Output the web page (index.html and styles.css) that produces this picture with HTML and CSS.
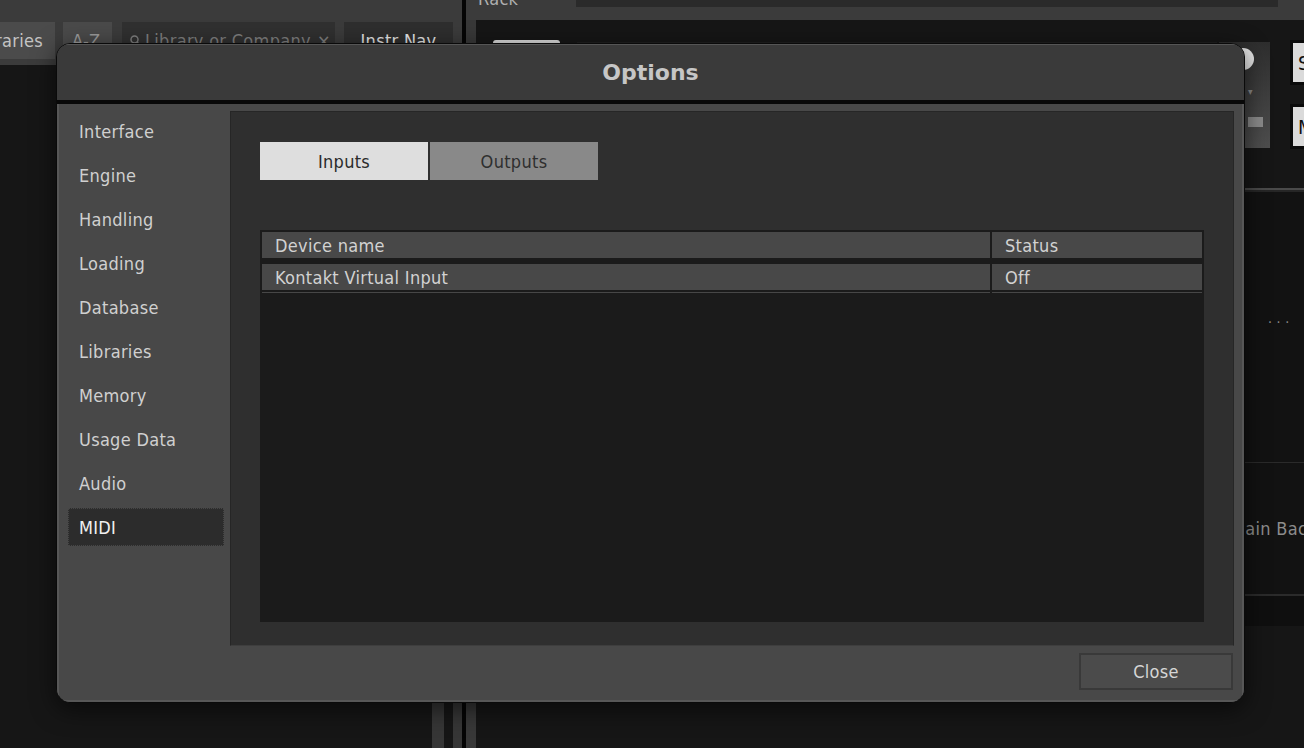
FILE: index.html
```html
<!DOCTYPE html>
<html lang="en">
<head>
    <meta charset="UTF-8">
    <meta name="viewport" content="width=device-width, initial-scale=1.0">
    <title>Options</title>
    <link rel="stylesheet" href="styles.css">
</head>
<body>
    <div class="app">
        <div class="browser">
            <div class="browser-head"></div>
            <div class="browser-tools">
                <div class="tool tool-lib"><span>Libraries</span></div>
                <div class="tool tool-az">A-Z</div>
                <div class="tool tool-search">
                    <svg width="11" height="11" viewBox="0 0 11 11"><circle cx="4.5" cy="4.5" r="3.5" fill="none" stroke="#7e7e7e" stroke-width="1.5"/><path d="M7 7l3 3" stroke="#7e7e7e" stroke-width="1.5"/></svg>
                    <span>Library or Company</span>
                    <span class="clear">×</span>
                </div>
                <div class="tool tool-nav">Instr Nav</div>
            </div>
            <div class="browser-body">
                <div class="browser-scroll"><span></span><span></span></div>
            </div>
        </div>
        <div class="split"></div>
        <div class="rack">
            <div class="rack-head">
                <span class="rack-label">Rack</span>
                <div class="rack-bar"></div>
            </div>
            <div class="rack-body">
                <div class="inst-header">
                    <div class="inst-logo"></div>
                    <div class="inst-name"></div>
                    <div class="inst-knob">
                        <div class="knob"></div>
                        <div class="knob-arrow">▾</div>
                        <div class="knob-meter"></div>
                    </div>
                    <div class="inst-buttons">
                        <div class="inst-btn">S</div>
                        <div class="inst-btn">M</div>
                    </div>
                </div>
                <div class="rack-rule"></div>
                <div class="inst-panel">· · ·</div>
                <div class="inst-footer">Main Back</div>
                <div class="inst-bottom"></div>
            </div>
        </div>
    </div>

    <div class="dialog">
        <div class="dialog-title">Options</div>
        <div class="dialog-body">
            <ul class="nav">
                <li>Interface</li>
                <li>Engine</li>
                <li>Handling</li>
                <li>Loading</li>
                <li>Database</li>
                <li>Libraries</li>
                <li>Memory</li>
                <li>Usage Data</li>
                <li>Audio</li>
                <li class="active">MIDI</li>
            </ul>
            <div class="panel">
                <div class="tabs">
                    <div class="tab active">Inputs</div>
                    <div class="tab">Outputs</div>
                </div>
                <div class="device-table">
                    <div class="row">
                        <div class="cell">Device name</div>
                        <div class="cell">Status</div>
                    </div>
                    <div class="row">
                        <div class="cell">Kontakt Virtual Input</div>
                        <div class="cell">Off</div>
                    </div>
                    <div class="row-end"><span></span><span></span></div>
                </div>
            </div>
            <button class="close-btn">Close</button>
        </div>
    </div>
</body>
</html>
```

FILE: styles.css
```css
body {
    margin: 0;
    width: 1304px;
    height: 748px;
    overflow: hidden;
    position: relative;
    background-color: #141414;
    font-family: "DejaVu Sans Condensed", "DejaVu Sans", sans-serif;
    font-stretch: condensed;
    letter-spacing: 0.3px;
}

/* the app behind the dialog */
.app {
    display: flex;
    height: 748px;
}

.browser {
    width: 462px;
    display: flex;
    flex-direction: column;
}

.browser-head {
    height: 20px;
    background-color: #3b3b3b;
}

.browser-tools {
    height: 45px;
    background-color: #3b3b3b;
    display: flex;
    align-items: flex-start;
    padding-top: 2px;
    box-sizing: border-box;
}

.tool {
    height: 37px;
    display: flex;
    align-items: center;
    font-size: 18px;
    white-space: nowrap;
    overflow: hidden;
    box-sizing: border-box;
    flex-shrink: 0;
}

.tool-lib {
    width: 55px;
    justify-content: flex-end;
    padding-right: 12px;
    background-color: #4b4b4b;
    color: #c4c4c4;
}

.tool-az {
    width: 49px;
    margin-left: 8px;
    padding-left: 9px;
    background-color: #4a4a4a;
    color: #9a9a9a;
}

.tool-search {
    width: 213px;
    margin-left: 10px;
    padding-left: 8px;
    gap: 4px;
    background-color: #303030;
    color: #7e7e7e;
}

.tool-search .clear {
    margin-left: 2px;
}

.tool-nav {
    width: 109px;
    margin-left: 9px;
    justify-content: center;
    background-color: #2e2e2e;
    color: #e4e4e4;
}

.browser-body {
    flex: 1;
    background-color: #161616;
    display: flex;
    justify-content: flex-end;
}

.browser-scroll {
    width: 30px;
    display: flex;
    justify-content: space-between;
}

.browser-scroll span {
    width: 12px;
    background-color: #363636;
}

.browser-scroll span + span {
    width: 9px;
}

.split {
    width: 4px;
    background-color: #050505;
}

.rack {
    flex: 1;
    min-width: 0;
    display: flex;
    flex-direction: column;
}

.rack-head {
    height: 20px;
    background-color: #3b3b3b;
    display: flex;
    align-items: flex-start;
    padding-left: 12px;
    overflow: hidden;
}

.rack-label {
    width: 98px;
    flex-shrink: 0;
    font-size: 18px;
    line-height: 18px;
    margin-top: -10px;
    color: #b0b0b0;
}

.rack-bar {
    width: 702px;
    flex-shrink: 0;
    height: 7px;
    background-color: #2a2a2a;
}

.rack-body {
    flex: 1;
    display: flex;
    flex-direction: column;
    padding-top: 20px;
    border-left: 10px solid #383838;
    background-color: #161616;
    overflow: hidden;
}

.inst-header {
    height: 110px;
    display: flex;
    padding-left: 17px;
}

.inst-header > div {
    flex-shrink: 0;
}

.inst-logo {
    width: 67px;
    height: 14px;
    border-radius: 3px;
    background-color: #dcdcdc;
}

.inst-name {
    width: 640px;
    margin-left: 17px;
    margin-top: 2px;
    background-color: #202020;
}

.inst-knob {
    width: 51px;
    height: 106px;
    margin-left: 2px;
    margin-top: 2px;
    background: linear-gradient(#2e2e2e, #4e4e4e);
    display: flex;
    flex-direction: column;
    padding-left: 13px;
    box-sizing: border-box;
}

.knob {
    width: 22px;
    height: 22px;
    margin-top: 6px;
    border-radius: 50%;
    background-color: #e6e6e6;
}

.knob-arrow {
    font-size: 10px;
    color: #888;
    margin-top: 16px;
    padding-left: 16px;
}

.knob-meter {
    width: 15px;
    height: 10px;
    margin-top: 20px;
    margin-left: 16px;
    background-color: #8a8a8a;
}

.inst-buttons {
    margin-left: 20px;
    display: flex;
    flex-direction: column;
    gap: 19px;
}

.inst-btn {
    width: 30px;
    height: 45px;
    box-sizing: border-box;
    border: 3px solid #0a0a0a;
    background-color: #dadada;
    color: #111;
    font-size: 20px;
    padding-left: 5px;
    display: flex;
    align-items: center;
}

.rack-rule {
    height: 2px;
    margin-top: 38px;
    background-color: #4a4a4a;
    border-bottom: 2px solid #262626;
}

.inst-panel {
    height: 271px;
    flex-shrink: 0;
    box-sizing: border-box;
    padding: 122px 0 0 792px;
    line-height: 16px;
    font-size: 14px;
    color: #8a8a8a;
    border-bottom: 1px solid #2a2a2a;
    background-color: #121212;
}

.inst-footer {
    height: 133px;
    flex-shrink: 0;
    box-sizing: border-box;
    padding-left: 755px;
    display: flex;
    align-items: center;
    font-size: 18px;
    color: #8c8c8c;
    white-space: nowrap;
    border-bottom: 2px solid #2b2b2b;
    background-color: #121212;
}

.inst-bottom {
    height: 30px;
    flex-shrink: 0;
    background-color: #0f0f0f;
}

/* options dialog */
.dialog {
    position: absolute;
    left: 56px;
    top: 43px;
    width: 1189px;
    height: 660px;
    box-sizing: border-box;
    border: 1px solid #0a0a0a;
    border-radius: 14px;
    background-color: #484848;
    box-shadow: 0 6px 24px rgba(0, 0, 0, 0.6);
    overflow: hidden;
    display: flex;
    flex-direction: column;
    letter-spacing: 0.3px;
}

.dialog-title {
    height: 60px;
    box-sizing: border-box;
    border-top: 1px solid #555;
    border-bottom: 4px solid #080808;
    background-color: #3a3a3a;
    display: flex;
    align-items: center;
    justify-content: center;
    font-family: "DejaVu Sans", sans-serif;
    font-stretch: normal;
    font-weight: bold;
    font-size: 22px;
    letter-spacing: 0;
    color: #c6c6c6;
}

.dialog-body {
    flex: 1;
    display: grid;
    grid-template-columns: 173px 1004px;
    grid-template-rows: 535px 37px;
    row-gap: 7px;
    padding-top: 7px;
    align-content: start;
    box-shadow: inset 2px 0 #575757, inset -2px 0 #575757, inset 0 -2px #575757;
}

.nav {
    grid-row: 1 / 3;
    list-style: none;
    margin: 0;
    padding: 1px 0 0 11px;
}

.nav li {
    width: 156px;
    height: 38px;
    margin-bottom: 6px;
    padding-left: 11px;
    box-sizing: border-box;
    display: flex;
    align-items: center;
    font-size: 18px;
    color: #d0d0d0;
}

.nav li.active {
    margin-top: 2px;
    background-color: #2c2c2c;
    border: 1px dotted #464646;
    padding-left: 10px;
    color: #f0f0f0;
}

.panel {
    box-sizing: border-box;
    padding: 30px 0 0 29px;
    background-color: #2f2f2f;
    border: 1px solid #262626;
    border-bottom-color: #3e3e3e;
}

.tabs {
    display: flex;
    gap: 2px;
}

.tab {
    width: 168px;
    height: 38px;
    display: flex;
    align-items: center;
    justify-content: center;
    font-size: 18px;
    background-color: #898989;
    color: #2f2f2f;
}

.tab.active {
    background-color: #dedede;
    color: #2b2b2b;
}

.device-table {
    width: 944px;
    height: 392px;
    margin-top: 50px;
    padding: 2px;
    box-sizing: border-box;
    background-color: #1b1b1b;
}

.row {
    display: grid;
    grid-template-columns: 728px 210px;
    column-gap: 2px;
    height: 26px;
    margin-bottom: 6px;
}

.row + .row {
    margin-bottom: 2px;
}

.cell {
    display: flex;
    align-items: center;
    padding-left: 13px;
    background-color: #484848;
    color: #d2d2d2;
    font-size: 18px;
    white-space: nowrap;
}

.row-end {
    display: grid;
    grid-template-columns: 728px 210px;
    column-gap: 2px;
    height: 1px;
}

.row-end span {
    background-color: #474747;
}

.close-btn {
    grid-column: 2;
    justify-self: end;
    width: 154px;
    height: 37px;
    margin-right: 1px;
    padding: 0;
    background-color: #4b4b4b;
    border: 2px solid #393939;
    color: #d6d6d6;
    font-family: "DejaVu Sans Condensed", "DejaVu Sans", sans-serif;
    font-stretch: condensed;
    font-size: 18px;
    letter-spacing: 0.3px;
}
```
